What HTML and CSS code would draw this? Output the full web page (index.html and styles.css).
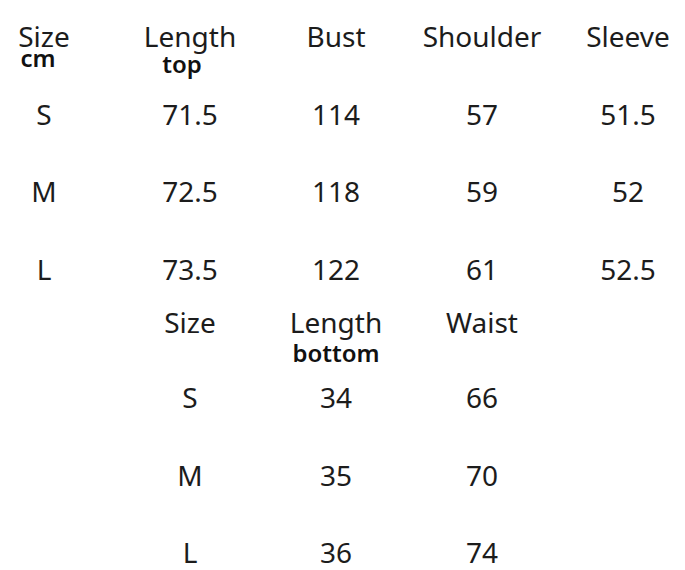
FILE: index.html
```html
<!DOCTYPE html>
<html>
<head>
<meta charset="utf-8">
<link rel="stylesheet" href="styles.css">
</head>
<body>
<div class="chart">
  <div class="grid top-grid">
    <div class="cell head"><span class="label">Size</span><span class="sub sub-cm">cm</span></div>
    <div class="cell head"><span class="label">Length</span><span class="sub sub-top">top</span></div>
    <div class="cell head"><span class="label">Bust</span></div>
    <div class="cell head"><span class="label">Shoulder</span></div>
    <div class="cell head"><span class="label">Sleeve</span></div>

    <div class="cell">S</div><div class="cell">71.5</div><div class="cell">114</div><div class="cell">57</div><div class="cell">51.5</div>
    <div class="cell">M</div><div class="cell">72.5</div><div class="cell">118</div><div class="cell">59</div><div class="cell">52</div>
    <div class="cell">L</div><div class="cell">73.5</div><div class="cell">122</div><div class="cell">61</div><div class="cell">52.5</div>
  </div>

  <div class="grid bottom-grid">
    <div class="cell head c2"><span class="label">Size</span></div>
    <div class="cell head"><span class="label">Length</span><span class="sub sub-bottom">bottom</span></div>
    <div class="cell head"><span class="label">Waist</span></div>

    <div class="cell c2">S</div><div class="cell">34</div><div class="cell">66</div>
    <div class="cell c2">M</div><div class="cell">35</div><div class="cell">70</div>
    <div class="cell c2">L</div><div class="cell">36</div><div class="cell">74</div>
  </div>
</div>
</body>
</html>
```

FILE: styles.css
```css
html, body {
  margin: 0;
  padding: 0;
  background: #ffffff;
}

body {
  font-family: "Noto Sans", "Open Sans", sans-serif;
  font-size: 28px;
  color: #1c1c1c;
  width: 685px;
  height: 570px;
  overflow: hidden;
}

.chart {
  padding-top: 17px;
}

.grid {
  display: grid;
  grid-template-columns: repeat(5, 146px);
  margin-left: -29px;
}

.top-grid {
  grid-template-rows: 77.5px 77.5px 77.5px 53.5px;
}

.bottom-grid {
  grid-template-rows: 75px 77.5px 77.5px 40px;
}

.cell {
  line-height: 38px;
  text-align: center;
}

.c2 {
  grid-column-start: 2;
}

.label {
  display: block;
  line-height: 30px;
  margin-top: 4px;
}

.sub {
  display: block;
  font-size: 24px;
  font-weight: 600;
  color: #111;
  line-height: 14px;
}

.sub-cm {
  margin-top: 0;
  padding-right: 12px;
}

.sub-top {
  margin-top: 6px;
  padding-right: 16px;
}

.sub-bottom {
  margin-top: 9px;
}
```
